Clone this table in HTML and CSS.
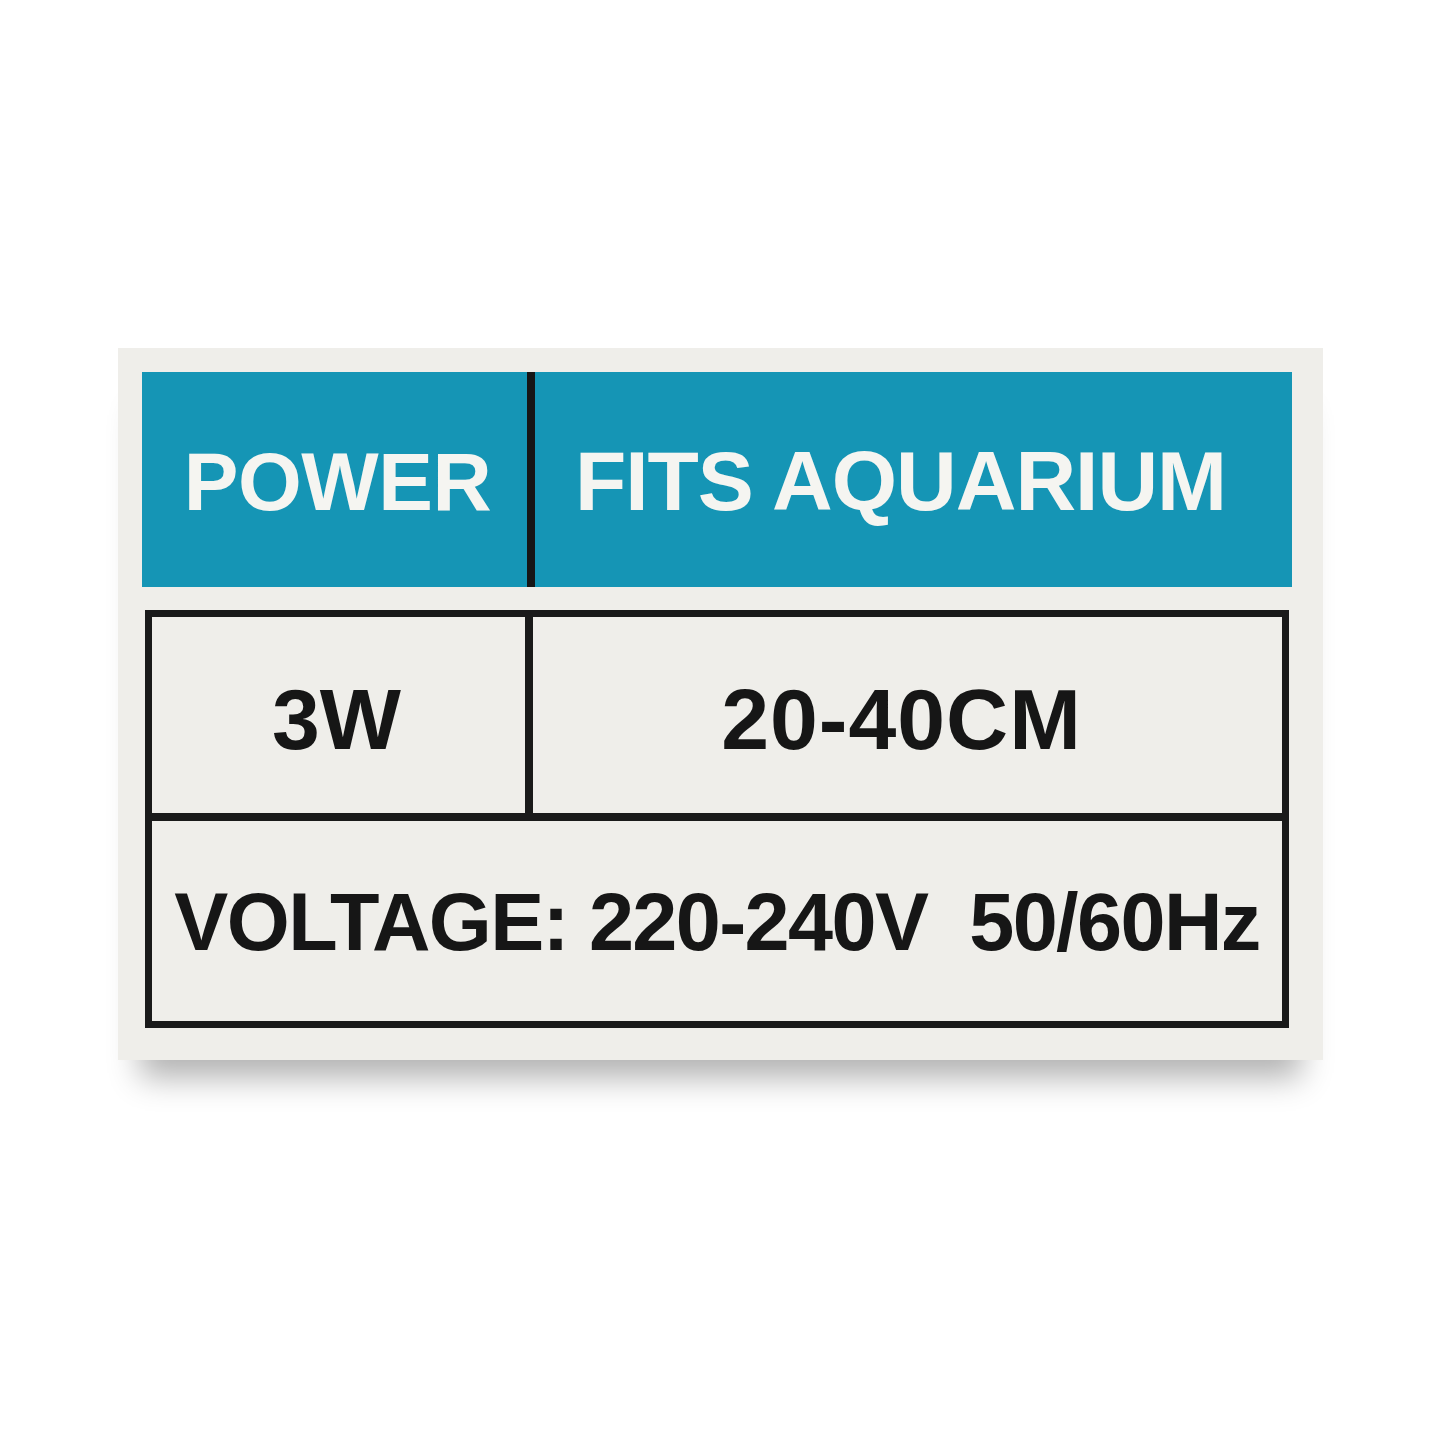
FILE: index.html
```html
<!DOCTYPE html>
<html lang="en">
<head>
<meta charset="utf-8">
<title>Aquarium Label</title>
<link rel="stylesheet" href="styles.css">
</head>
<body>
<div class="card">
  <div class="header">
    <div class="hcell hcell-left">POWER</div>
    <div class="hcell hcell-right">FITS AQUARIUM</div>
  </div>
  <div class="spec">
    <div class="row row-top">
      <div class="cell cell-left">3W</div>
      <div class="cell cell-right">20-40CM</div>
    </div>
    <div class="row row-bottom">
      <div class="cell cell-full">VOLTAGE: 220-240V&nbsp;&nbsp;50/60Hz</div>
    </div>
  </div>
</div>
</body>
</html>
```
FILE: styles.css
```css
html, body {
  margin: 0;
  padding: 0;
  background: #ffffff;
}
body {
  width: 1445px;
  height: 1444px;
  overflow: hidden;
  font-family: "Liberation Sans", Arial, sans-serif;
}
.card {
  box-sizing: border-box;
  margin: 348px 0 0 118px;
  width: 1205px;
  height: 712px;
  padding: 24px 0 0 24px;
  background: #efeeea;
  box-shadow: 0 40px 30px -22px rgba(0, 0, 0, 0.3);
}
.header {
  display: grid;
  grid-template-columns: 393px 1fr;
  width: 1150px;
  height: 215px;
  background: #1595b5;
}
.hcell {
  display: flex;
  align-items: center;
  justify-content: center;
  color: #f5f5f1;
  font-weight: 700;
  font-size: 84px;
  letter-spacing: -1px;
  padding-top: 4px;
}
.hcell-left {
  border-right: 8px solid #161616;
  font-size: 82px;
  letter-spacing: -0.5px;
  padding-left: 6px;
}
.hcell-right {
  padding-right: 26px;
}
.spec {
  box-sizing: border-box;
  margin: 23px 0 0 3px;
  width: 1144px;
  height: 418px;
  border: 7px solid #1a1a1a;
  display: flex;
  flex-direction: column;
}
.row {
  display: grid;
}
.row-top {
  grid-template-columns: 381px 1fr;
  height: 196px;
  border-bottom: 8px solid #1a1a1a;
}
.row-bottom {
  flex: 1;
}
.cell {
  display: flex;
  align-items: center;
  justify-content: center;
  color: #161616;
  font-weight: 700;
}
.cell-left {
  border-right: 8px solid #1a1a1a;
  font-size: 86px;
  padding-top: 8px;
  padding-right: 4px;
}
.cell-right {
  font-size: 86px;
  letter-spacing: 1px;
  padding-top: 8px;
  padding-right: 12px;
}
.cell-full {
  font-size: 81px;
  letter-spacing: -1.6px;
  padding-top: 2px;
  padding-left: 0;
  white-space: nowrap;
}
```
